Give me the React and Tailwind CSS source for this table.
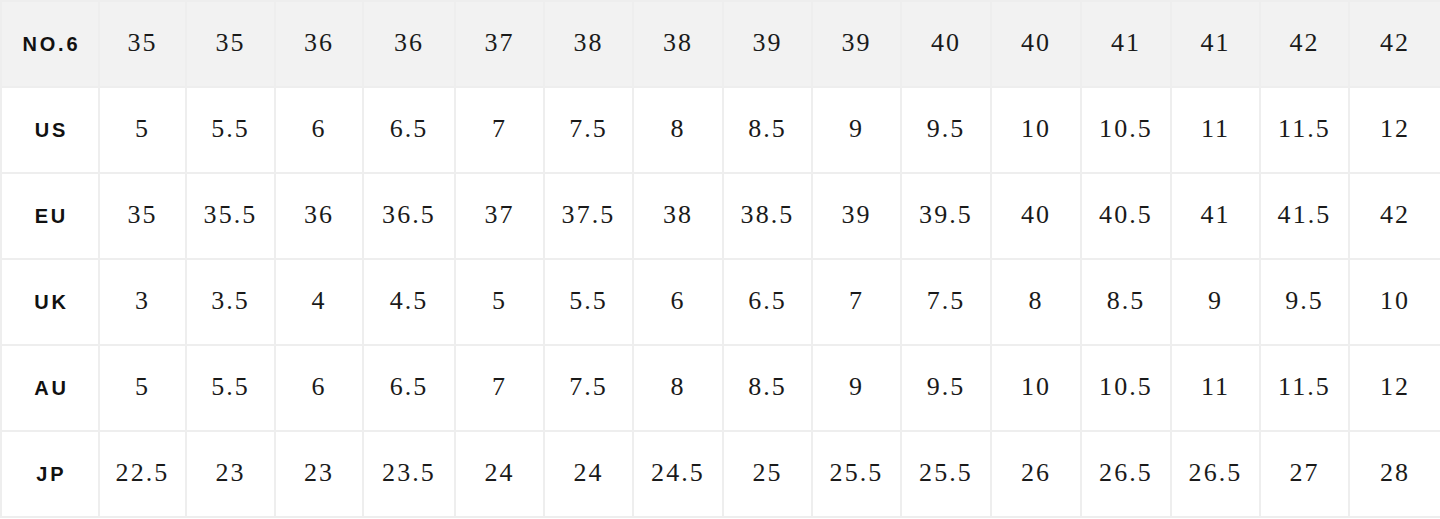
import React from "react";

const widths = [
  "w-[98px]", "w-[87px]", "w-[89px]", "w-[88px]", "w-[92px]", "w-[89px]", "w-[89px]", "w-[90px]",
  "w-[89px]", "w-[89px]", "w-[90px]", "w-[90px]", "w-[90px]", "w-[89px]", "w-[89px]", "w-[92px]",
];

const header = ["35", "35", "36", "36", "37", "38", "38", "39", "39", "40", "40", "41", "41", "42", "42"];

const rows = [
  ["US", ["5", "5.5", "6", "6.5", "7", "7.5", "8", "8.5", "9", "9.5", "10", "10.5", "11", "11.5", "12"]],
  ["EU", ["35", "35.5", "36", "36.5", "37", "37.5", "38", "38.5", "39", "39.5", "40", "40.5", "41", "41.5", "42"]],
  ["UK", ["3", "3.5", "4", "4.5", "5", "5.5", "6", "6.5", "7", "7.5", "8", "8.5", "9", "9.5", "10"]],
  ["AU", ["5", "5.5", "6", "6.5", "7", "7.5", "8", "8.5", "9", "9.5", "10", "10.5", "11", "11.5", "12"]],
  ["JP", ["22.5", "23", "23", "23.5", "24", "24", "24.5", "25", "25.5", "25.5", "26", "26.5", "26.5", "27", "28"]],
];

const labelCls =
  "border-2 border-[#eeeeee] text-center font-['Liberation_Sans',Arial,sans-serif] font-bold text-[20px] tracking-[0.14em] pl-[0.14em] text-[#111111]";
const numCls =
  "border-2 border-[#eeeeee] text-center font-['Liberation_Serif','Times_New_Roman',serif] text-[26px] tracking-[0.08em] pb-[4px] text-[#1a1a1a]";

export default function App() {
  return (
    <div className="w-[1440px] h-[519px] bg-white overflow-hidden">
      <table className="table-fixed border-collapse w-[1440px]">
        <colgroup>
          {widths.map((w, i) => (
            <col key={i} className={w} />
          ))}
        </colgroup>
        <thead>
          <tr className="h-[86px] bg-[#f2f2f2]">
            <th className={labelCls}>NO.6</th>
            {header.map((h, i) => (
              <th key={i} className={numCls + " font-normal"}>
                {h}
              </th>
            ))}
          </tr>
        </thead>
        <tbody>
          {rows.map(([label, vals]) => (
            <tr key={label} className="h-[86px]">
              <td className={labelCls}>{label}</td>
              {vals.map((v, i) => (
                <td key={i} className={numCls}>
                  {v}
                </td>
              ))}
            </tr>
          ))}
        </tbody>
      </table>
    </div>
  );
}
